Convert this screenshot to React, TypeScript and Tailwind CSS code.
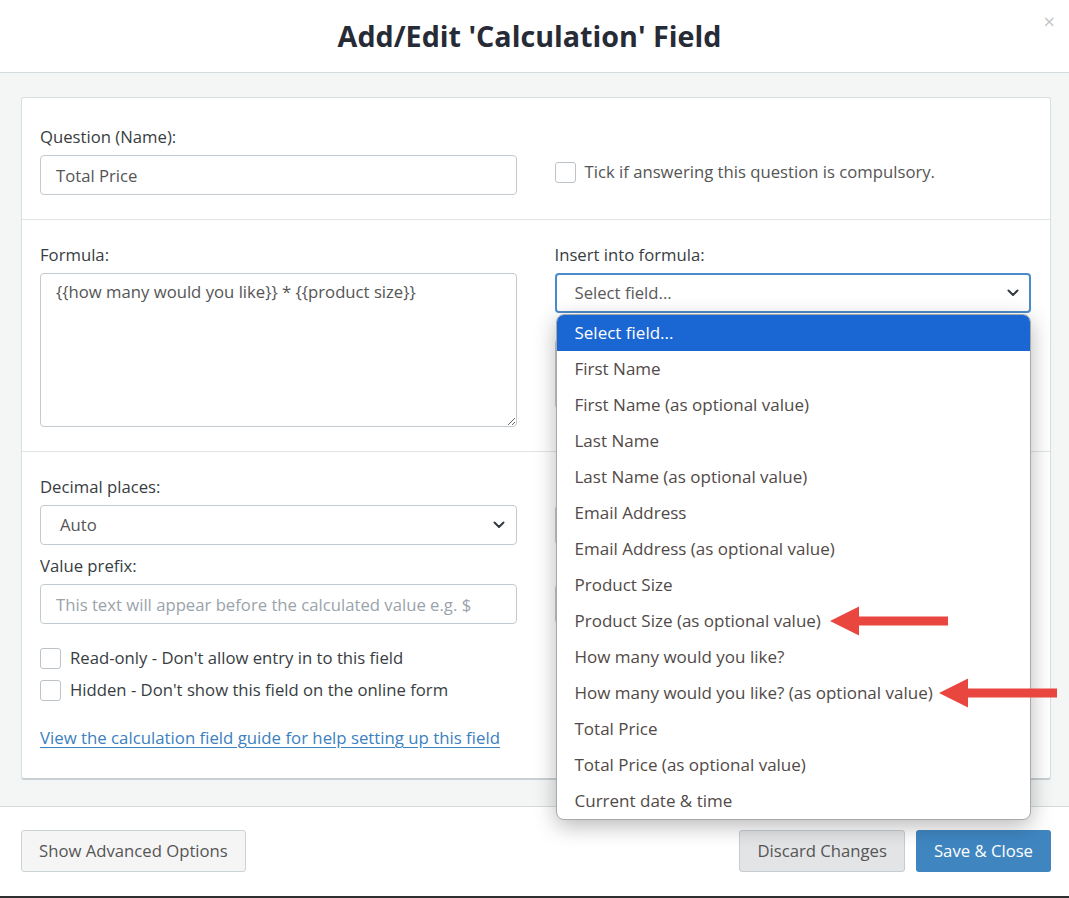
import React from "react";

const fieldOptions = [
  "Select field...",
  "First Name",
  "First Name (as optional value)",
  "Last Name",
  "Last Name (as optional value)",
  "Email Address",
  "Email Address (as optional value)",
  "Product Size",
  "Product Size (as optional value)",
  "How many would you like?",
  "How many would you like? (as optional value)",
  "Total Price",
  "Total Price (as optional value)",
  "Current date & time",
];

const Chevron = () => (
  <svg width="12" height="8" viewBox="0 0 12 8" className="shrink-0">
    <path d="M1.5 1.5 6 6l4.5-4.5" fill="none" stroke="#343a40" strokeWidth="2" strokeLinecap="round" strokeLinejoin="round" />
  </svg>
);

const Arrow = ({ className }: { className: string }) => (
  <svg width="118" height="30" viewBox="0 0 118 30" className={className}>
    <polygon points="0,15 29,0.5 29,10.5 118,10.5 118,19.5 29,19.5 29,29.5" fill="#e8463f" />
  </svg>
);

const Checkbox = () => (
  <span className="inline-block h-[21px] w-[21px] shrink-0 rounded-[3px] border border-[#bcc4c9] bg-white" />
);

const Label = ({ children }: { children?: React.ReactNode }) => (
  <div className="mb-[6px] h-[24px] leading-[24px] text-[#383d42]">{children}</div>
);

const FakeSelect = ({ value, focused }: { value?: string; focused?: boolean }) => (
  <div
    className={
      focused
        ? "flex h-[40px] items-center justify-between rounded-[4px] border-2 border-[#4a8ccb] bg-white pl-[18px] pr-[10px] text-[#5a5a5a]"
        : "flex h-[40px] items-center justify-between rounded-[4px] border border-[#c3cbd1] bg-white pl-[19px] pr-[11px] text-[#555]"
    }
  >
    <span>{value}</span>
    <Chevron />
  </div>
);

export default function App() {
  return (
    <div className="relative flex min-h-[898px] w-[1069px] flex-col bg-white font-['Open_Sans',sans-serif] text-[16.7px] leading-[24px] text-[#333]">
      <header className="relative flex h-[73px] shrink-0 items-center justify-center border-b border-[#d3dbde] pr-[10px]">
        <h1 className="text-[28.7px] font-bold leading-none text-[#262b36]">Add/Edit 'Calculation' Field</h1>
        <span className="absolute right-[14px] top-[10px] text-[20px] leading-[24px] text-[#c4c4c4]">×</span>
      </header>

      <main className="bg-[#f4f5f5] pb-[26px] pl-[21px] pr-[18px] pt-[24px]">
        <div className="rounded-[3px] border border-b-2 border-[#d8dee1] border-b-[#c8d0d4] bg-white">
          {/* question */}
          <section className="grid grid-cols-2 gap-[38px] border-b border-[#dfe4e6] pb-[24px] pl-[18px] pr-[19px] pt-[27px]">
            <div>
              <Label>Question (Name):</Label>
              <input
                readOnly
                value="Total Price"
                className="h-[40px] w-full rounded-[4px] border border-[#c3cbd1] px-[15px] text-[#555] outline-none"
              />
            </div>
            <div className="pt-[27px]">
              <label className="flex h-[40px] items-center gap-[9px] text-[#555]">
                <Checkbox />
                Tick if answering this question is compulsory.
              </label>
            </div>
          </section>

          {/* formula */}
          <section className="grid grid-cols-2 gap-[38px] border-b border-[#dfe4e6] pb-[24px] pl-[18px] pr-[19px] pt-[23px]">
            <div>
              <Label>Formula:</Label>
              <textarea
                readOnly
                defaultValue="{{how many would you like}} * {{product size}}"
                className="block h-[154px] w-full rounded-[4px] border border-[#c3cbd1] px-[15px] py-[6px] text-[#555] outline-none"
              />
            </div>
            <div>
              <Label>Insert into formula:</Label>
              <div className="relative">
                <FakeSelect value="Select field..." focused />
                <ul className="absolute left-[1px] right-0 top-[41px] z-10 overflow-hidden rounded-[8px] border border-[#a9a9a9] bg-white text-[17px] shadow-[0_6px_22px_rgba(0,0,0,0.28)]">
                  {fieldOptions.map((opt, i) => (
                    <li
                      key={opt}
                      className={
                        i === 0
                          ? "flex h-[36px] items-center bg-[#1a66d2] pl-[18px] text-white"
                          : "flex h-[36px] items-center pl-[18px] text-[#514a47]"
                      }
                    >
                      {opt}
                    </li>
                  ))}
                </ul>
              </div>
              <div className="mt-[26px] h-[70px] rounded-[4px] border border-[#c3cbd1]" />
            </div>
          </section>

          {/* formatting */}
          <section className="grid grid-cols-2 gap-[38px] pb-[28px] pl-[18px] pr-[19px] pt-[23px]">
            <div>
              <Label>Decimal places:</Label>
              <FakeSelect value="Auto" />
              <div className="mt-[9px]">
                <Label>Value prefix:</Label>
              </div>
              <input
                readOnly
                placeholder="This text will appear before the calculated value e.g. $"
                className="h-[40px] w-full rounded-[4px] border border-[#c3cbd1] px-[15px] text-[#555] outline-none placeholder:text-[#9aa3ab]"
              />
              <div className="mt-[18px] flex flex-col text-[#383d42]">
                <label className="flex h-[32px] items-center gap-[9px]">
                  <Checkbox />
                  Read-only - Don't allow entry in to this field
                </label>
                <label className="flex h-[32px] items-center gap-[9px]">
                  <Checkbox />
                  Hidden - Don't show this field on the online form
                </label>
              </div>
              <a href="#" className="mt-[20px] block text-[16.8px] text-[#3b80c0] underline underline-offset-[3px]">
                View the calculation field guide for help setting up this field
              </a>
            </div>
            {/* right column, covered by the open dropdown */}
            <div>
              <Label />
              <FakeSelect />
              <div className="mt-[9px]">
                <Label />
              </div>
              <div className="h-[40px] rounded-[4px] border border-[#c3cbd1]" />
            </div>
          </section>
        </div>
      </main>

      <footer className="flex items-center justify-between border-t border-[#d3dbdf] pb-[24px] pl-[21px] pr-[18px] pt-[23px]">
        <button className="h-[42px] rounded-[3px] border border-[#ccd3d7] bg-[#f5f5f5] px-[17px] text-[#555]">
          Show Advanced Options
        </button>
        <div className="flex gap-[11px]">
          <button className="h-[42px] rounded-[3px] border border-[#c6cdd2] bg-[#e3e4e5] px-[17px] text-[#555]">
            Discard Changes
          </button>
          <button className="h-[42px] rounded-[3px] bg-[#3f86c1] px-[18px] text-white">Save &amp; Close</button>
        </div>
      </footer>
      <div className="h-[2px] bg-[#2f2f2f]" />

      <Arrow className="absolute left-[830px] top-[606px] z-20" />
      <Arrow className="absolute left-[939px] top-[678px] z-20" />
    </div>
  );
}
